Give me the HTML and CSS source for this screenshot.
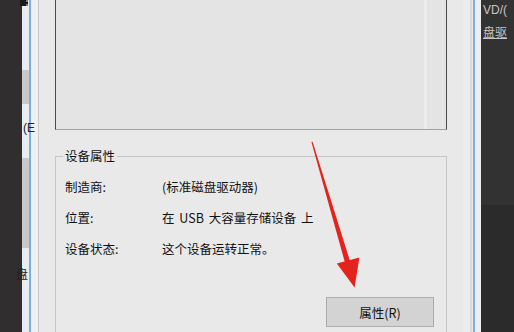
FILE: index.html
```html
<!DOCTYPE html>
<html lang="zh-CN">
<head>
<meta charset="utf-8">
<title>设备属性</title>
<link rel="stylesheet" href="styles.css">
</head>
<body>
<div class="screen">
  <div class="desk-left">
    <span class="dl-icon"></span>
    <span class="dl-e">(E</span>
    <span class="dl-pan">盘</span>
  </div>
  <div class="frame-left">
    <div class="fl-a"><div class="thumb t1"></div><div class="thumb t2"></div></div>
    <div class="fl-blue"></div>
    <div class="fl-b"></div>
  </div>
  <div class="dialog">
    <div class="listbox">
      <div class="lb-main"></div>
      <div class="lb-col"></div>
    </div>
    <fieldset class="group">
      <legend class="group-title">设备属性</legend>
      <div class="rows">
        <div class="row"><span class="label">制造商:</span><span class="value">(标准磁盘驱动器)</span></div>
        <div class="row"><span class="label">位置:</span><span class="value">在 USB 大容量存储设备 上</span></div>
        <div class="row"><span class="label">设备状态:</span><span class="value">这个设备运转正常。</span></div>
      </div>
      <div class="actions">
        <button class="btn">属性(R)</button>
      </div>
    </fieldset>
  </div>
  <div class="frame-right">
    <div class="fr-a"></div>
    <div class="fr-grey"></div>
    <div class="fr-blue"></div>
    <div class="fr-b"></div>
  </div>
  <div class="desk-right">
    <div class="dr-top">
      <span class="dr-t1">VD/(</span>
      <span class="dr-t2">盘驱</span>
    </div>
    <div class="dr-bottom"></div>
  </div>
</div>
<svg class="arrow" width="514" height="332" viewBox="0 0 514 332" aria-hidden="true">
  <polygon points="311.4,142 312.6,141.8 350.3,262 345.2,263.4" fill="#e3231d"/>
  <polygon points="336.8,263.6 359.4,257.4 354.6,287.5" fill="#e3231d"/>
</svg>
</body>
</html>
```
FILE: styles.css
```css
* { box-sizing: border-box; }
html, body { margin: 0; padding: 0; }
body {
  width: 514px;
  height: 332px;
  overflow: hidden;
  position: relative;
  background: #e9e9e9;
  font-family: "Noto Sans CJK SC", "Microsoft YaHei", sans-serif;
  font-size: 12.5px;
  color: #111;
}
.screen {
  display: flex;
  height: 332px;
  overflow: hidden;
}
.desk-left {
  width: 22px;
  flex: none;
  background: #302e2e;
  position: relative;
}
.dl-icon {
  position: absolute;
  left: 20px; top: 0;
  width: 8px; height: 6px;
  background: #1a1a1a;
  border-right: 2px dotted #777;
}
.dl-e {
  position: absolute;
  left: 23px; top: 120px;
  color: #222;
  font-size: 12px;
  line-height: 16px;
  z-index: 2;
  font-family: "Liberation Sans", sans-serif;
}
.dl-pan {
  position: absolute;
  left: 16px; top: 266px;
  color: #222;
  font-size: 12px;
  line-height: 16px;
  z-index: 2;
}
.frame-left {
  width: 17px;
  flex: none;
  display: flex;
  border-right: 1px solid #c9c9c9;
}
.fl-a {
  width: 7px;
  background: #e8edf1;
  display: flex;
  flex-direction: column;
}
.thumb { background: #c9c9c9; width: 7px; }
.t1 { margin-top: 70px; height: 34px; }
.t2 { margin-top: 54px; height: 90px; }
.fl-blue { width: 2px; background: #78aee0; }
.fl-b { width: 7px; background: #eff0f2; }

.dialog {
  width: 424px;
  flex: none;
  padding: 0 16px;
  background: #e9e9e9;
}
.listbox {
  height: 130px;
  background: #e4e4e4;
  border-left: 1px solid #4a4a4a;
  border-right: 1px solid #4a4a4a;
  border-bottom: 1px solid #a3a3a3;
  display: flex;
}
.lb-main { flex: 1; }
.lb-col {
  width: 19px;
  border-left: 3px solid #ececec;
  border-right: 1px solid #eaeaea;
  margin-right: 3px;
}
.group {
  margin: 18px 0 0 0;
  padding: 0 0 0 9px;
  border: 1px solid #c6c6c6;
  border-bottom: none;
  height: 184px;
  min-width: 0;
}
.group-title {
  padding: 0 2px;
  margin-left: -2px;
  line-height: 16px;
}
.rows {
  display: flex;
  flex-direction: column;
  gap: 11px;
  margin-top: 13px;
}
.row {
  display: flex;
  height: 20px;
  line-height: 20px;
}
.label { width: 97px; flex: none; }
.value { white-space: nowrap; word-spacing: 2px; }
.actions {
  display: flex;
  justify-content: flex-end;
  padding-right: 12px;
  margin-top: 38px;
}
.btn {
  width: 108px;
  height: 30px;
  background: #d3d3d3;
  border: 1px solid #adadad;
  font-family: inherit;
  font-size: 12.5px;
  color: #111;
  padding: 0;
  margin: 0;
}
.frame-right {
  width: 18px;
  flex: none;
  display: flex;
}
.fr-a { width: 7px; background: #ececec; }
.fr-grey { width: 2px; background: #dadada; }
.fr-blue { width: 2px; background: #79aee0; margin-left: 1px; }
.fr-b { width: 6px; background: #eeeeee; }
.desk-right {
  width: 33px;
  flex: none;
  display: flex;
  flex-direction: column;
  overflow: hidden;
}
.dr-top {
  height: 205px;
  background: #333232;
  display: flex;
  flex-direction: column;
  padding-left: 2px;
  color: #c4c4c4;
  white-space: nowrap;
  font-size: 12px;
}
.dr-t1 {
  font-family: "Liberation Sans", sans-serif;
  line-height: 14px;
  margin-top: 3px;
}
.dr-t2 {
  line-height: 14px;
  margin-top: 8px;
  text-decoration: underline;
}
.dr-bottom { flex: 1; background: #2c2b2b; }
.arrow {
  position: absolute;
  left: 0; top: 0;
  pointer-events: none;
}
```
